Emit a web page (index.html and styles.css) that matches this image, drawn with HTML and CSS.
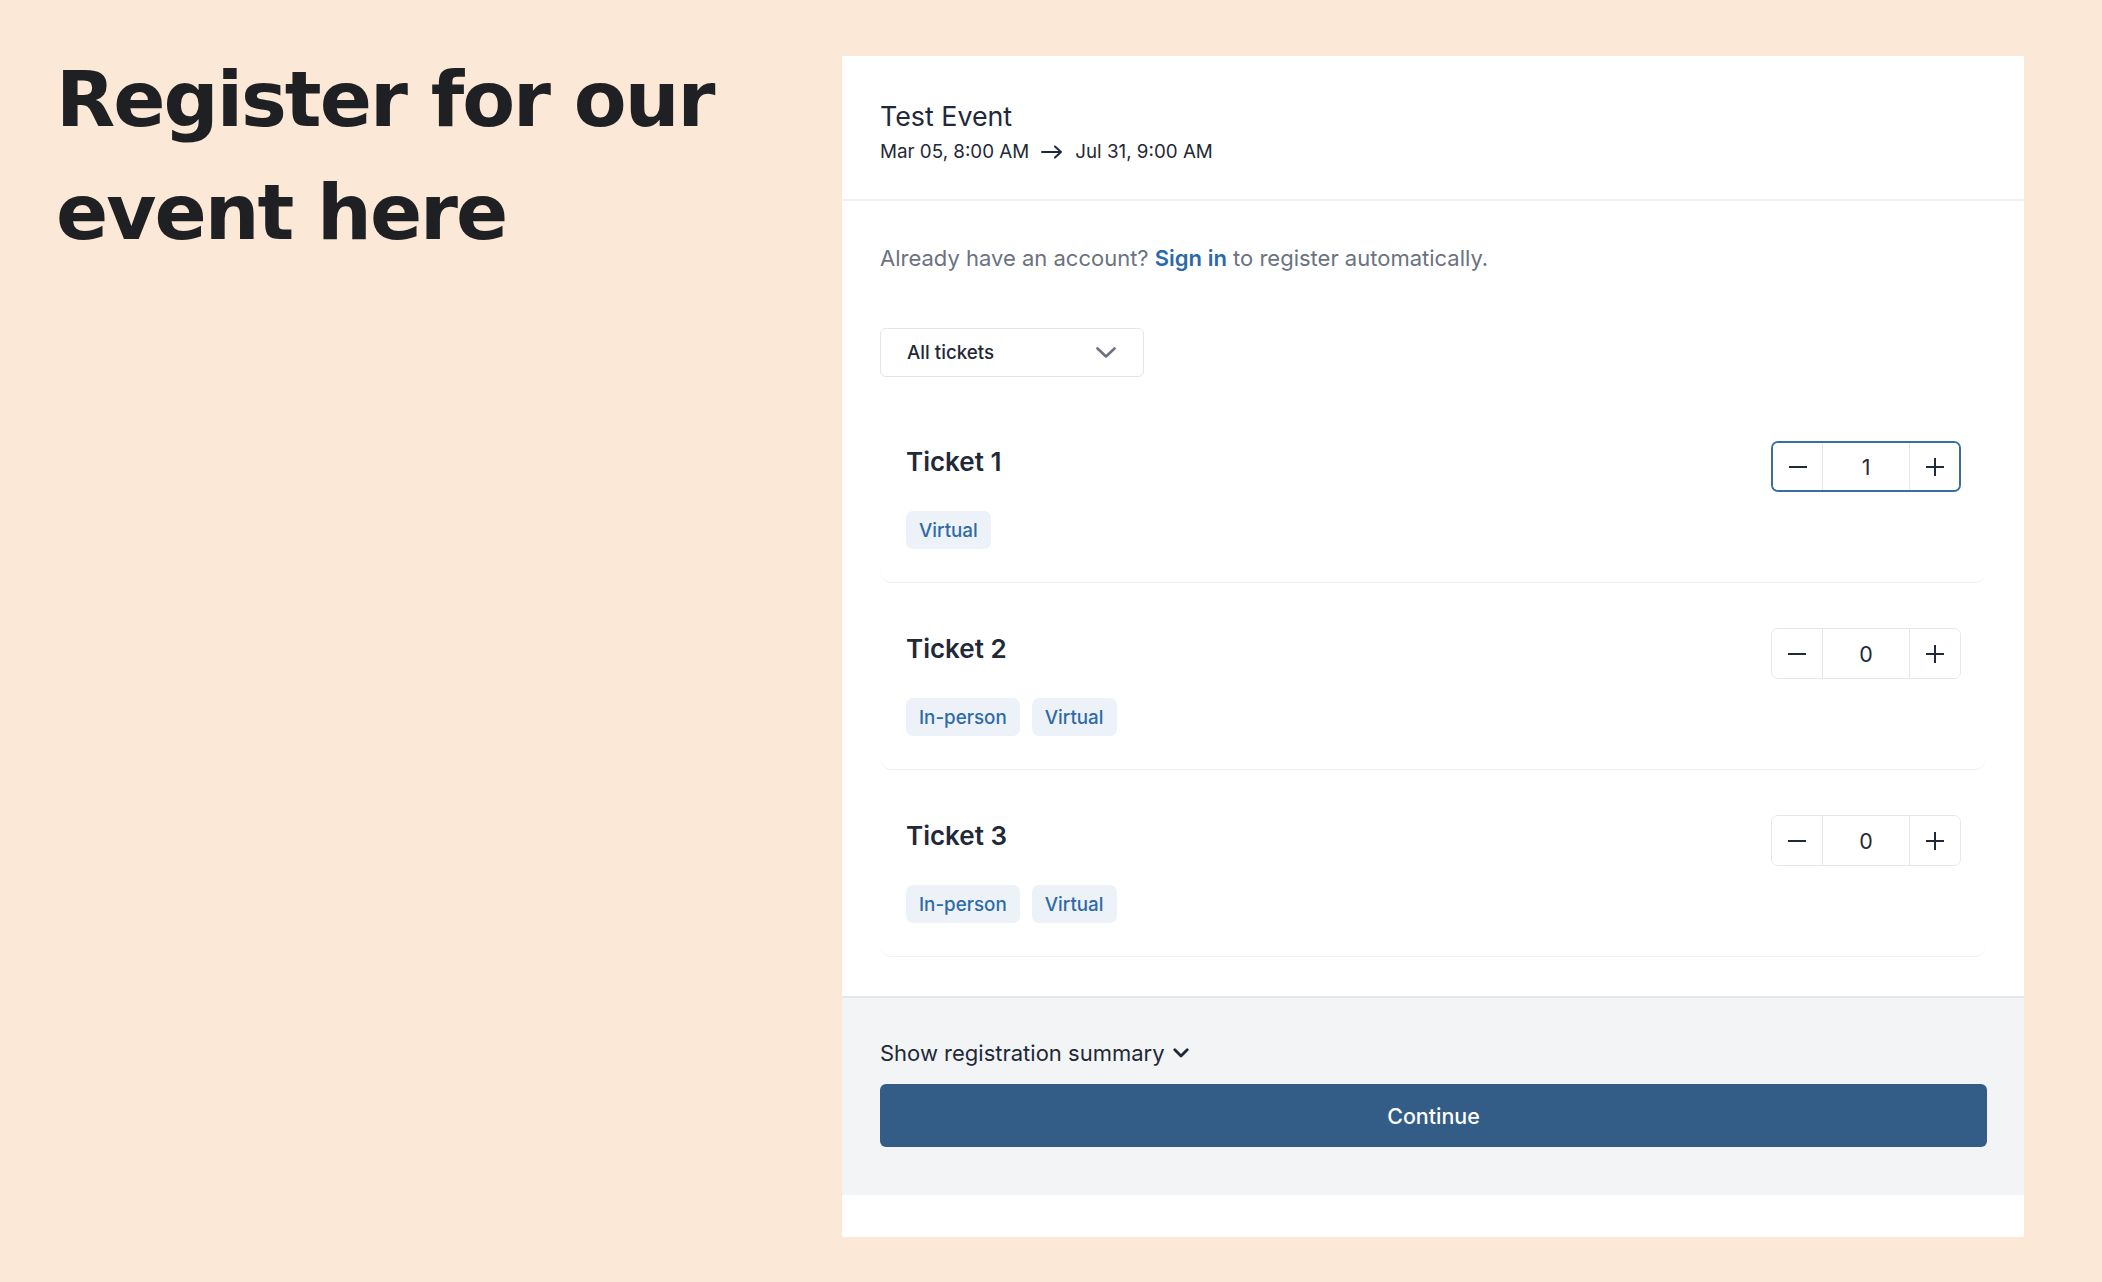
FILE: index.html
```html
<!DOCTYPE html>
<html lang="en">
<head>
    <meta charset="UTF-8">
    <meta name="viewport" content="width=device-width, initial-scale=1.0">
    <title>Register - Test Event</title>
    <link rel="stylesheet" href="styles.css">
</head>
<body>
    <div class="page">
        <div class="intro">
            <h1 class="intro-title">Register for our event here</h1>
        </div>

        <div class="card">
            <!-- Event header -->
            <div class="card-header">
                <div class="event-name">Test Event</div>
                <div class="event-dates">
                    <span>Mar 05, 8:00 AM</span>
                    <svg class="date-arrow" width="22" height="14" viewBox="0 0 22 14"><path d="M1 7H20M14 1.5L20 7L14 12.5" fill="none" stroke="#1f2937" stroke-width="2" stroke-linecap="round" stroke-linejoin="round"/></svg>
                    <span>Jul 31, 9:00 AM</span>
                </div>
            </div>

            <div class="card-body">
                <p class="signin-note">Already have an account? <a href="#" class="signin-link">Sign in</a> to register automatically.</p>

                <div class="ticket-filter">
                    <span>All tickets</span>
                    <svg width="20" height="11" viewBox="0 0 20 11"><path d="M1.5 1.5L10 9.5L18.5 1.5" fill="none" stroke="#6b7280" stroke-width="2.6" stroke-linecap="round" stroke-linejoin="round"/></svg>
                </div>

                <div class="ticket-list">
                    <!-- Ticket 1 -->
                    <div class="ticket">
                        <div class="ticket-info">
                            <div class="ticket-name">Ticket 1</div>
                            <div class="ticket-tags">
                                <span class="tag">Virtual</span>
                            </div>
                        </div>
                        <div class="stepper stepper-active">
                            <button type="button" class="stepper-btn"><svg width="20" height="20" viewBox="0 0 20 20"><path d="M1 10H19" stroke="#1f2937" stroke-width="2"/></svg></button>
                            <input type="text" class="stepper-value" value="1">
                            <button type="button" class="stepper-btn"><svg width="20" height="20" viewBox="0 0 20 20"><path d="M1 10H19M10 1V19" stroke="#1f2937" stroke-width="2"/></svg></button>
                        </div>
                    </div>

                    <!-- Ticket 2 -->
                    <div class="ticket">
                        <div class="ticket-info">
                            <div class="ticket-name">Ticket 2</div>
                            <div class="ticket-tags">
                                <span class="tag">In-person</span>
                                <span class="tag">Virtual</span>
                            </div>
                        </div>
                        <div class="stepper">
                            <button type="button" class="stepper-btn"><svg width="20" height="20" viewBox="0 0 20 20"><path d="M1 10H19" stroke="#1f2937" stroke-width="2"/></svg></button>
                            <input type="text" class="stepper-value" value="0">
                            <button type="button" class="stepper-btn"><svg width="20" height="20" viewBox="0 0 20 20"><path d="M1 10H19M10 1V19" stroke="#1f2937" stroke-width="2"/></svg></button>
                        </div>
                    </div>

                    <!-- Ticket 3 -->
                    <div class="ticket">
                        <div class="ticket-info">
                            <div class="ticket-name">Ticket 3</div>
                            <div class="ticket-tags">
                                <span class="tag">In-person</span>
                                <span class="tag">Virtual</span>
                            </div>
                        </div>
                        <div class="stepper">
                            <button type="button" class="stepper-btn"><svg width="20" height="20" viewBox="0 0 20 20"><path d="M1 10H19" stroke="#1f2937" stroke-width="2"/></svg></button>
                            <input type="text" class="stepper-value" value="0">
                            <button type="button" class="stepper-btn"><svg width="20" height="20" viewBox="0 0 20 20"><path d="M1 10H19M10 1V19" stroke="#1f2937" stroke-width="2"/></svg></button>
                        </div>
                    </div>
                </div>
            </div>

            <div class="card-footer">
                <button type="button" class="summary-toggle">
                    Show registration summary
                    <svg width="16" height="10" viewBox="0 0 16 10"><path d="M1.8 1.8L8 8L14.2 1.8" fill="none" stroke="#1f2937" stroke-width="2.8" stroke-linecap="round" stroke-linejoin="round"/></svg>
                </button>
                <button type="button" class="continue-btn">Continue</button>
            </div>
        </div>
    </div>
</body>
</html>
```

FILE: styles.css
```css
body {
    margin: 0;
    background-color: #fbe8d6;
    font-family: Inter, "Noto Sans", sans-serif;
    color: #1f2937;
}
.page {
    display: flex;
    align-items: flex-start;
    min-height: 100vh;
}
.intro {
    flex: 0 0 842px;
    box-sizing: border-box;
    padding: 43px 40px 0 56px;
}
.intro-title {
    margin: 0;
    font-family: "DejaVu Sans", sans-serif;
    font-weight: 700;
    font-size: 77px;
    line-height: 113px;
    letter-spacing: -2px;
    color: #1f2023;
}
.card {
    flex: 0 0 1182px;
    margin-top: 56px;
    padding-bottom: 42px;
    background-color: #fff;
}
.card-header {
    padding: 41px 38px 34px;
    border-bottom: 2px solid #f1f1f2;
}
.event-name {
    font-size: 26.8px;
    line-height: 38px;
    font-weight: 400;
    margin-bottom: 3px;
}
.event-dates {
    display: flex;
    align-items: center;
    gap: 12px;
    font-size: 18.8px;
    line-height: 27px;
}
.card-body {
    padding: 41px 38px 39px;
}
.signin-note {
    margin: 0;
    font-size: 22px;
    line-height: 32px;
    color: #6b7280;
}
.signin-link {
    color: #2b6aa9;
    font-weight: 600;
    text-decoration: none;
}
.ticket-filter {
    display: flex;
    align-items: center;
    justify-content: space-between;
    box-sizing: border-box;
    width: 264px;
    height: 49px;
    margin-top: 54px;
    padding: 0 27px 0 26px;
    border: 1px solid #e3e4e7;
    border-radius: 6px;
    font-size: 18.8px;
    font-weight: 500;
}
.ticket-list {
    margin-top: 19px;
}
.ticket {
    display: flex;
    justify-content: space-between;
    align-items: flex-start;
    padding: 45px 25px 33px 26px;
    border-bottom: 1px solid #eeeff0;
    border-radius: 12px;
}
.ticket-name {
    margin-top: 2px;
    font-size: 26px;
    line-height: 38px;
    font-weight: 600;
}
.ticket-tags {
    display: flex;
    gap: 12px;
    margin-top: 30px;
}
.tag {
    display: inline-flex;
    align-items: center;
    height: 38px;
    padding: 0 13px;
    border-radius: 7px;
    background-color: #edf2f9;
    color: #2f6aa6;
    font-size: 18.8px;
    font-weight: 500;
}
.stepper {
    display: flex;
    box-sizing: border-box;
    width: 190px;
    height: 51px;
    border: 1px solid #e5e7eb;
    border-radius: 7px;
    overflow: hidden;
}
.stepper-active {
    border: 2px solid #3a6ca5;
}
.stepper-btn {
    flex: 1;
    display: flex;
    align-items: center;
    justify-content: center;
    padding: 0;
    border: none;
    background: #fff;
    cursor: pointer;
}
.stepper-value {
    width: 88px;
    flex: 0 0 88px;
    box-sizing: border-box;
    padding: 0;
    border: none;
    border-left: 1px solid #e5e7eb;
    border-right: 1px solid #e5e7eb;
    text-align: center;
    font-family: inherit;
    font-size: 21.45px;
    color: #1f2937;
    outline: none;
}
.card-footer {
    display: flex;
    flex-direction: column;
    align-items: flex-start;
    padding: 39px 37px 48px 38px;
    border-top: 2px solid #e5e7eb;
    background-color: #f3f4f6;
}
.summary-toggle {
    display: flex;
    align-items: center;
    gap: 8px;
    padding: 0;
    border: none;
    background: none;
    font-family: inherit;
    font-size: 22px;
    line-height: 32px;
    color: #1f2937;
    cursor: pointer;
}
.continue-btn {
    align-self: stretch;
    height: 63px;
    margin-top: 15px;
    border: none;
    border-radius: 6px;
    background-color: #335c87;
    color: #fff;
    font-family: inherit;
    font-size: 21.45px;
    font-weight: 500;
    cursor: pointer;
}
```
